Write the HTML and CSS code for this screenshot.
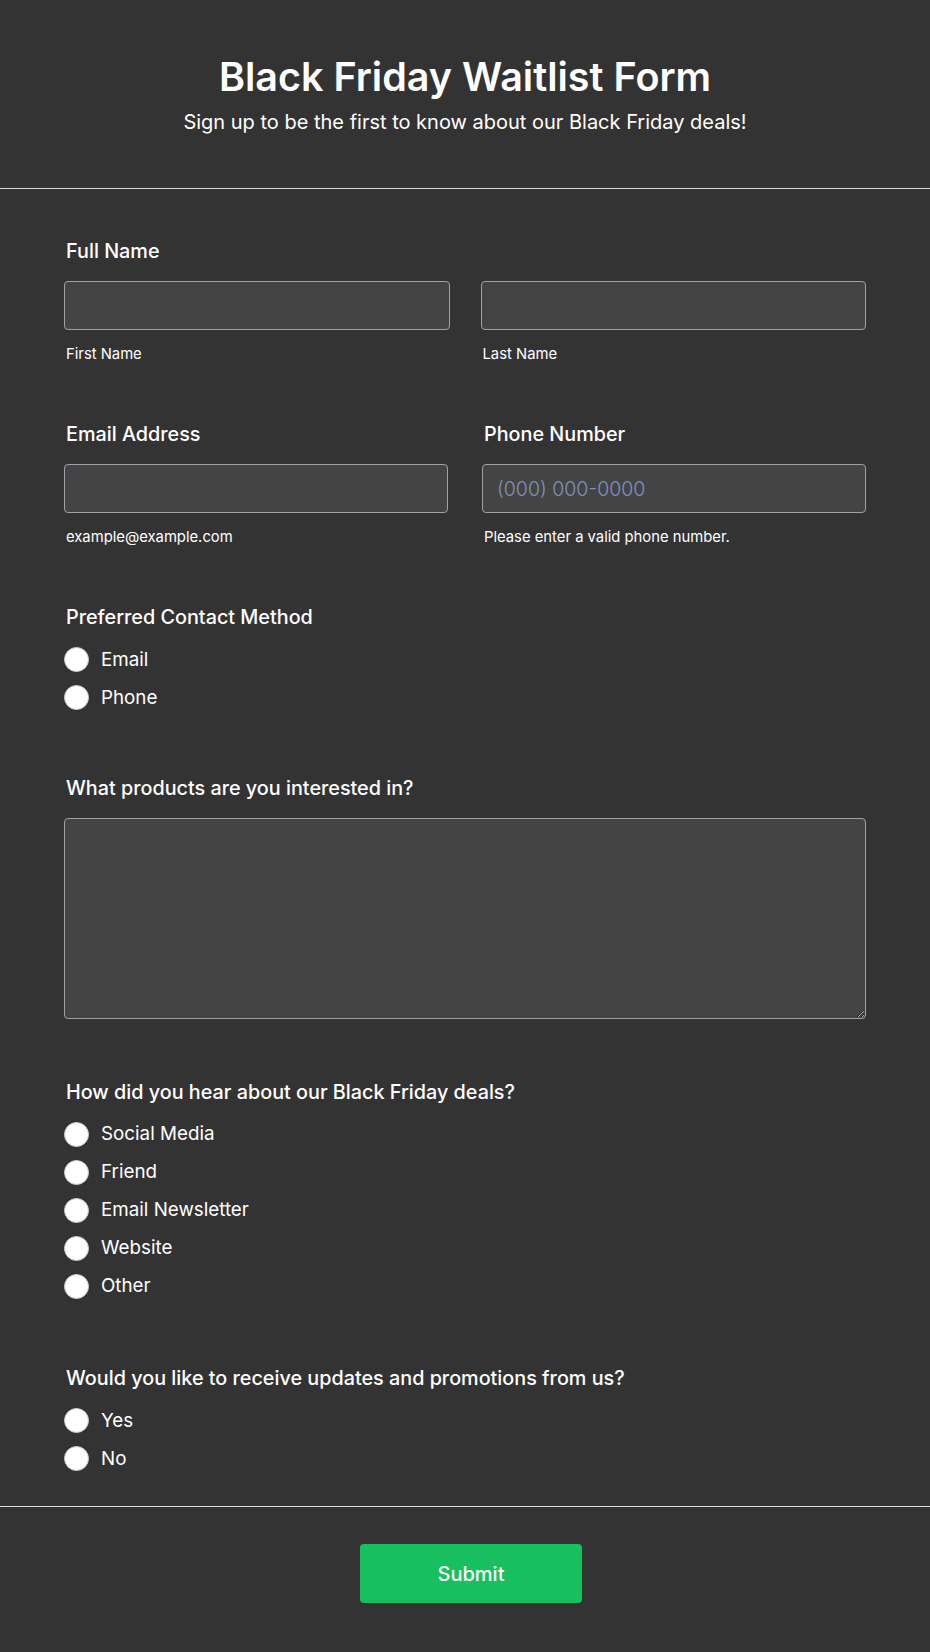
FILE: index.html
```html
<!DOCTYPE html>
<html lang="en">
<head>
<meta charset="utf-8">
<title>Black Friday Waitlist Form</title>
<link rel="stylesheet" href="styles.css">
</head>
<body>
<div class="page">
  <header class="header">
    <h1 class="title">Black Friday Waitlist Form</h1>
    <p class="subtitle">Sign up to be the first to know about our Black Friday deals!</p>
  </header>

  <form class="form">
    <div class="field">
      <div class="label">Full Name</div>
      <div class="grid grid-name">
        <div class="col">
          <input class="input" type="text">
          <div class="sublabel">First Name</div>
        </div>
        <div class="col">
          <input class="input" type="text">
          <div class="sublabel">Last Name</div>
        </div>
      </div>
    </div>

    <div class="grid grid-contact field">
      <div class="col">
        <div class="label">Email Address</div>
        <input class="input" type="email">
        <div class="sublabel">example@example.com</div>
      </div>
      <div class="col">
        <div class="label">Phone Number</div>
        <input class="input" type="tel" placeholder="(000) 000-0000">
        <div class="sublabel">Please enter a valid phone number.</div>
      </div>
    </div>

    <div class="field">
      <div class="label">Preferred Contact Method</div>
      <div class="options">
        <label class="option"><span class="radio"></span><span class="option-text">Email</span></label>
        <label class="option"><span class="radio"></span><span class="option-text">Phone</span></label>
      </div>
    </div>

    <div class="field field-textarea">
      <div class="label">What products are you interested in?</div>
      <textarea class="textarea"></textarea>
    </div>

    <div class="field field-hear">
      <div class="label">How did you hear about our Black Friday deals?</div>
      <div class="options">
        <label class="option"><span class="radio"></span><span class="option-text">Social Media</span></label>
        <label class="option"><span class="radio"></span><span class="option-text">Friend</span></label>
        <label class="option"><span class="radio"></span><span class="option-text">Email Newsletter</span></label>
        <label class="option"><span class="radio"></span><span class="option-text">Website</span></label>
        <label class="option"><span class="radio"></span><span class="option-text">Other</span></label>
      </div>
    </div>

    <div class="field field-last">
      <div class="label">Would you like to receive updates and promotions from us?</div>
      <div class="options">
        <label class="option"><span class="radio"></span><span class="option-text">Yes</span></label>
        <label class="option"><span class="radio"></span><span class="option-text">No</span></label>
      </div>
    </div>
  </form>

  <footer class="footer">
    <button class="submit" type="button">Submit</button>
  </footer>
</div>
</body>
</html>
```

FILE: styles.css
```css
* { box-sizing: border-box; }

html, body {
  margin: 0;
  padding: 0;
  background: #333333;
}

body {
  font-family: Inter, "Noto Sans", "Liberation Sans", sans-serif;
  color: #ffffff;
}

.page {
  min-height: 1652px;
  display: flex;
  flex-direction: column;
}

.header {
  height: 189px;
  border-bottom: 1px solid #dcdcdc;
  padding-top: 55px;
  text-align: center;
}

.title {
  margin: 0;
  font-size: 39.5px;
  line-height: 44px;
  font-weight: 600;
}

.subtitle {
  margin: 11px 0 0;
  font-size: 20px;
  line-height: 24px;
  font-weight: 400;
}

.form {
  padding: 50px 64px 28.5px;
  border-bottom: 1px solid #dcdcdc;
}

.field {
  margin-bottom: 59px;
}

.field-textarea { margin-bottom: 61px; }
.field-hear { margin-bottom: 61px; }
.field-last { margin-bottom: 0; }

.label {
  font-size: 19.8px;
  line-height: 24px;
  font-weight: 500;
  padding-left: 2px;
  margin-bottom: 18px;
}

.grid {
  display: grid;
  grid-template-columns: 1fr 1fr;
}

.grid-name { column-gap: 31px; }
.grid-contact { column-gap: 34px; }

.col {
  display: flex;
  flex-direction: column;
}

.input {
  display: block;
  width: 100%;
  height: 49px;
  margin: 0;
  padding: 0 14px;
  background: #444444;
  border: 1px solid #9da1a8;
  border-radius: 4px;
  color: #ffffff;
  font-family: inherit;
  font-size: 19.5px;
  font-weight: 300;
  outline: none;
}

.input::placeholder {
  color: #7f91bd;
  opacity: 1;
}

.sublabel {
  margin-top: 15px;
  padding-left: 2px;
  font-size: 14.8px;
  line-height: 18px;
  font-weight: 400;
}

.options {
  display: flex;
  flex-direction: column;
  margin-top: -6.5px;
}

.option {
  display: flex;
  align-items: center;
  height: 38px;
  gap: 12px;
}

.radio {
  width: 25px;
  height: 25px;
  border-radius: 50%;
  background: #ffffff;
  border: 1px solid #c8c8c8;
  flex: none;
}

.option-text {
  font-size: 18.8px;
  line-height: 24px;
  font-weight: 400;
}

.textarea {
  display: block;
  width: 100%;
  height: 201px;
  margin: 0;
  padding: 10px 14px;
  background: #444444;
  border: 1px solid #9da1a8;
  border-radius: 4px;
  color: #ffffff;
  font-family: inherit;
  font-size: 18px;
  outline: none;
  resize: vertical;
}

.footer {
  flex: 1;
  display: flex;
  justify-content: center;
  align-items: flex-start;
  padding: 37px 0 0 12px;
}

.submit {
  width: 222px;
  height: 59px;
  border: none;
  border-radius: 4px;
  background: #18bf5e;
  color: #ffffff;
  font-family: inherit;
  font-size: 20px;
  font-weight: 500;
  cursor: pointer;
}
```
